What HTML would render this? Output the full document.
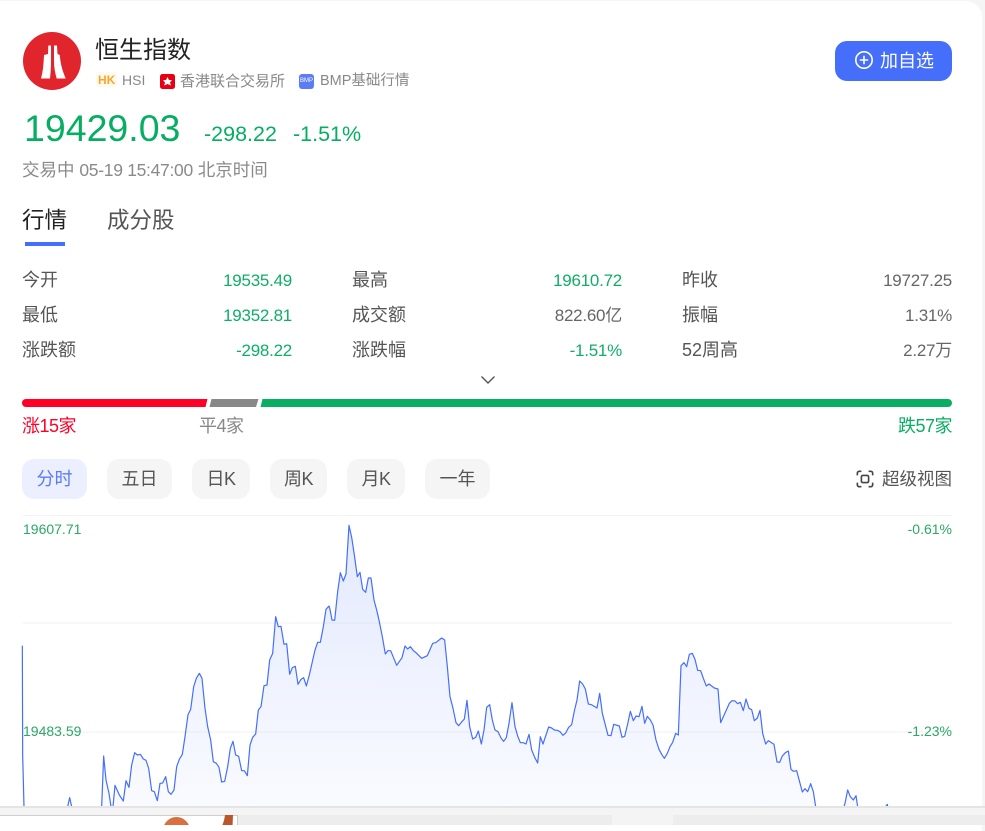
<!DOCTYPE html>
<html lang="zh-CN">
<head>
<meta charset="utf-8">
<style>
html,body{margin:0;padding:0;background:#f5f5f5;}
body{width:985px;height:825px;position:relative;overflow:hidden;font-family:"Liberation Sans","Noto Sans CJK SC",sans-serif;}
#card{position:absolute;left:0;top:1px;width:982px;height:830px;background:#fff;border-top-right-radius:16px;}
.t{position:absolute;white-space:nowrap;line-height:1;}
.r{text-align:right;}
.lab{font-size:18px;color:#555;}
.val{font-size:17px;letter-spacing:-.25px;}
.g{color:#0fae68;}
.d{color:#666;}
.btn{position:absolute;top:459px;height:40px;border-radius:12px;background:#f5f5f5;color:#555;font-size:18px;line-height:41px;text-align:center;}
.grid{position:absolute;left:23px;width:929px;height:2px;background:#f8f8f8;}
.axis{font-size:14px;color:#2aa866;}
</style>
</head>
<body>
<div id="card"></div>

<svg style="position:absolute;left:22px;top:31px" width="60" height="60" viewBox="0 0 60 60">
<circle cx="30" cy="30" r="29" fill="#e0252d"/>
<path d="M26.300 14.500 L29 14.500 L29 30 C29 37 28.600 42 28 47.500 L19 47.500 C20.800 41 21.600 34 22 24 L26 23 Z" fill="#fff"/>
<path d="M32 14.500 L35 14.500 L35.500 23 L37.800 24 C38.500 34 41 41 43.700 47.500 L34.700 47.500 C33 42 32 36 32 30 Z" fill="#fff"/>
</svg>

<div class="t" style="left:95px;top:39px;font-size:24px;color:#222;">恒生指数</div>

<div style="position:absolute;left:96px;top:72px;width:21px;height:15px;background:#fff9f0;border-radius:2px;"></div>
<div class="t" style="left:98px;top:74px;font-size:12px;font-weight:bold;color:#f9a825;">HK</div>
<div class="t" style="left:122px;top:73px;font-size:14px;color:#888;">HSI</div>
<svg style="position:absolute;left:160px;top:74px" width="15" height="15" viewBox="0 0 15 15">
<rect width="15" height="15" rx="2.500" fill="#e60012"/>
<path d="M7.500 3 L9 6 L12 6.200 L10 8.500 L11 11.500 L7.500 10 L4.200 11.500 L5 8.500 L3 6.200 L6 6 Z" fill="#fff"/>
</svg>
<div class="t" style="left:180px;top:74px;font-size:15px;color:#888;">香港联合交易所</div>
<div style="position:absolute;left:299px;top:74px;width:15px;height:15px;background:#5b7cf6;border-radius:3px;color:#fff;font-size:6px;line-height:15px;text-align:center;">BMP</div>
<div class="t" style="left:320px;top:74px;font-size:14.500px;color:#888;">BMP基础行情</div>

<div style="position:absolute;left:835px;top:41px;width:117px;height:40px;border-radius:12px;background:#456ffb;"></div>
<svg style="position:absolute;left:854px;top:50px" width="20" height="20" viewBox="0 0 20 20" fill="none" stroke="#fff" stroke-width="1.600">
<circle cx="10" cy="10" r="8.200"/><path d="M10 5.800V14.200M5.800 10H14.200"/>
</svg>
<div class="t" style="left:880px;top:52px;font-size:18px;color:#fff;">加自选</div>

<div class="t g" style="left:24px;top:110px;font-size:37.500px;color:#05ae62;">19429.03</div>
<div class="t g" style="left:204px;top:124px;font-size:21.500px;color:#05ae62;">-298.22</div>
<div class="t g" style="left:293px;top:124px;font-size:21.500px;color:#05ae62;">-1.51%</div>
<div class="t" style="left:22px;top:162px;font-size:17.500px;color:#8a8a8a;">交易中 <span style="letter-spacing:-.3px">05-19 15:47:00</span> 北京时间</div>

<div class="t" style="left:22px;top:210px;font-size:22.500px;color:#222;">行情</div>
<div class="t" style="left:107px;top:210px;font-size:22.500px;color:#555;">成分股</div>
<div style="position:absolute;left:25px;top:242px;width:40px;height:4px;background:#456ffb;"></div>

<div class="t lab" style="left:22px;top:271px;">今开</div>
<div class="t val g r" style="left:172px;width:120px;top:272px;">19535.49</div>
<div class="t lab" style="left:352px;top:271px;">最高</div>
<div class="t val g r" style="left:502px;width:120px;top:272px;">19610.72</div>
<div class="t lab" style="left:682px;top:271px;">昨收</div>
<div class="t val d r" style="left:832px;width:120px;top:272px;">19727.25</div>

<div class="t lab" style="left:22px;top:306px;">最低</div>
<div class="t val g r" style="left:172px;width:120px;top:307px;">19352.81</div>
<div class="t lab" style="left:352px;top:306px;">成交额</div>
<div class="t val d r" style="left:502px;width:120px;top:307px;">822.60亿</div>
<div class="t lab" style="left:682px;top:306px;">振幅</div>
<div class="t val d r" style="left:832px;width:120px;top:307px;">1.31%</div>

<div class="t lab" style="left:22px;top:341px;">涨跌额</div>
<div class="t val g r" style="left:172px;width:120px;top:342px;">-298.22</div>
<div class="t lab" style="left:352px;top:341px;">涨跌幅</div>
<div class="t val g r" style="left:502px;width:120px;top:342px;">-1.51%</div>
<div class="t lab" style="left:682px;top:341px;">52周高</div>
<div class="t val d r" style="left:832px;width:120px;top:342px;">2.27万</div>

<svg style="position:absolute;left:480px;top:375px" width="16" height="10" viewBox="0 0 16 10" fill="none" stroke="#555" stroke-width="1.400">
<path d="M1.500 1.500L8 8L14.500 1.500"/>
</svg>

<svg style="position:absolute;left:22px;top:399px" width="930" height="8" viewBox="0 0 930 8">
<path d="M4 0H185.500L183.500 8H4A4 4 0 0 1 4 0Z" fill="#ff0026"/>
<path d="M189.500 0H236.500L234 8H187.500Z" fill="#888"/>
<path d="M240.500 0H926A4 4 0 0 1 926 8H238.500Z" fill="#0aae62"/>
</svg>
<div class="t" style="left:22px;top:417px;font-size:18px;color:#ff0026;letter-spacing:-.5px;">涨15家</div>
<div class="t" style="left:199px;top:417px;font-size:18px;color:#888;letter-spacing:-.5px;">平4家</div>
<div class="t r" style="left:832px;width:120px;top:417px;font-size:18px;color:#0aae62;letter-spacing:-.5px;">跌57家</div>

<div class="btn" style="left:22px;width:65px;background:#ebefff;color:#5b7cf6;">分时</div>
<div class="btn" style="left:107px;width:65px;">五日</div>
<div class="btn" style="left:192px;width:58px;letter-spacing:-.5px;">日K</div>
<div class="btn" style="left:270px;width:57px;letter-spacing:-.5px;">周K</div>
<div class="btn" style="left:347px;width:58px;letter-spacing:-.5px;">月K</div>
<div class="btn" style="left:425px;width:65px;">一年</div>

<svg style="position:absolute;left:856px;top:470px" width="18" height="18" viewBox="0 0 20 20" fill="none" stroke="#444" stroke-width="1.800">
<path d="M1.500 6V3.500A2 2 0 0 1 3.500 1.500H6M14 1.500H16.500A2 2 0 0 1 18.500 3.500V6M18.500 14V16.500A2 2 0 0 1 16.500 18.500H14M6 18.500H3.500A2 2 0 0 1 1.500 16.500V14"/>
<rect x="6" y="6" width="8" height="8" rx="1.500"/>
</svg>
<div class="t" style="left:882px;top:471px;font-size:17.500px;color:#555;">超级视图</div>

<div class="grid" style="top:515px;height:1px;background:#f3f3f3;"></div>
<div class="grid" style="top:622px;"></div>
<div class="grid" style="top:731px;"></div>

<svg style="position:absolute;left:0;top:510px" width="985" height="296" viewBox="0 0 2955 888">
<defs>
<linearGradient id="fa" gradientUnits="userSpaceOnUse" x1="0" y1="46" x2="0" y2="888">
<stop offset="0" stop-color="#456ffb" stop-opacity=".15"/>
<stop offset="1" stop-color="#456ffb" stop-opacity=".03"/>
</linearGradient>
</defs>
<path fill="url(#fa)" d="M67 1000L67 407 68 735 72 890 72 1000 203 1000 203 890 209 863 215 890 215 1000 305 1000 305 890 311 738 318 810 327 850 333 890 333 1000 339 1000 339 890 345 826 358 855 370 873 378 812 387 832 395 765 404 728 412 735 421 733 430 747 438 751 446 775 455 842 463 845 472 872 480 820 488 819 497 800 505 845 513 853 522 840 530 770 538 748 547 733 555 680 564 614 572 598 581 530 589 505 598 490 606 505 615 595 623 650 632 690 640 755 649 760 657 772 665 816 674 814 683 770 691 715 699 694 707 735 716 739 725 782 733 782 742 797 750 705 758 682 767 672 775 600 783 590 792 527 801 525 809 450 818 430 827 320 835 350 843 349 852 403 860 401 869 493 877 473 886 469 894 523 903 508 911 503 919 528 928 495 945 420 953 397 961 397 970 350 978 298 987 288 990 298 996 330 1004 331 1013 245 1021 188 1030 213 1038 192 1047 46 1055 82 1063 135 1072 200 1080 187 1088 238 1097 247 1105 204 1113 204 1122 270 1130 300 1138 335 1147 380 1156 432 1164 422 1172 422 1190 466 1206 443 1215 408 1223 417 1231 410 1240 422 1248 428 1265 445 1282 437 1298 400 1307 398 1325 384 1334 390 1342 470 1350 560 1359 595 1368 638 1376 647 1384 637 1393 627 1401 571 1409 650 1418 687 1427 682 1435 663 1444 702 1452 660 1460 592 1469 584 1477 630 1485 660 1494 665 1503 684 1511 694 1519 683 1527 640 1536 578 1545 650 1553 678 1561 698 1570 698 1578 702 1587 673 1595 720 1604 742 1613 759 1621 680 1629 702 1646 651 1655 654 1663 660 1672 661 1680 665 1689 676 1697 669 1706 652 1715 644 1723 603 1731 570 1739 513 1748 522 1756 537 1765 582 1774 584 1791 594 1799 550 1807 610 1824 676 1833 677 1841 643 1858 648 1866 682 1874 679 1883 642 1891 604 1900 632 1908 618 1917 620 1926 589 1934 640 1942 619 1951 630 1959 645 1968 690 1977 718 1985 733 1993 745 2002 730 2010 710 2018 697 2027 670 2035 675 2043 467 2052 458 2060 470 2068 433 2077 430 2085 448 2093 481 2102 482 2110 505 2119 528 2127 522 2135 528 2143 534 2154 537 2162 638 2171 618 2188 580 2196 572 2205 573 2213 581 2221 577 2230 602 2238 567 2247 595 2255 599 2263 632 2272 624 2280 601 2288 670 2297 702 2305 692 2322 703 2331 756 2339 757 2347 738 2356 728 2365 723 2373 778 2381 784 2390 782 2407 846 2415 836 2423 845 2432 821 2440 845 2447 890 2447 1000 2532 1000 2532 890 2535 880 2543 840 2551 860 2560 870 2568 857 2573 890 2573 1000 2657 1000 2657 890 2662 883 2663 890 2663 1000Z"/>
<path fill="none" stroke="#456ffb" stroke-width="3.600" stroke-linejoin="round" d="M67 407L68 735 72 890 72 1000 203 1000 203 890 209 863 215 890 215 1000 305 1000 305 890 311 738 318 810 327 850 333 890 333 1000 339 1000 339 890 345 826 358 855 370 873 378 812 387 832 395 765 404 728 412 735 421 733 430 747 438 751 446 775 455 842 463 845 472 872 480 820 488 819 497 800 505 845 513 853 522 840 530 770 538 748 547 733 555 680 564 614 572 598 581 530 589 505 598 490 606 505 615 595 623 650 632 690 640 755 649 760 657 772 665 816 674 814 683 770 691 715 699 694 707 735 716 739 725 782 733 782 742 797 750 705 758 682 767 672 775 600 783 590 792 527 801 525 809 450 818 430 827 320 835 350 843 349 852 403 860 401 869 493 877 473 886 469 894 523 903 508 911 503 919 528 928 495 945 420 953 397 961 397 970 350 978 298 987 288 990 298 996 330 1004 331 1013 245 1021 188 1030 213 1038 192 1047 46 1055 82 1063 135 1072 200 1080 187 1088 238 1097 247 1105 204 1113 204 1122 270 1130 300 1138 335 1147 380 1156 432 1164 422 1172 422 1190 466 1206 443 1215 408 1223 417 1231 410 1240 422 1248 428 1265 445 1282 437 1298 400 1307 398 1325 384 1334 390 1342 470 1350 560 1359 595 1368 638 1376 647 1384 637 1393 627 1401 571 1409 650 1418 687 1427 682 1435 663 1444 702 1452 660 1460 592 1469 584 1477 630 1485 660 1494 665 1503 684 1511 694 1519 683 1527 640 1536 578 1545 650 1553 678 1561 698 1570 698 1578 702 1587 673 1595 720 1604 742 1613 759 1621 680 1629 702 1646 651 1655 654 1663 660 1672 661 1680 665 1689 676 1697 669 1706 652 1715 644 1723 603 1731 570 1739 513 1748 522 1756 537 1765 582 1774 584 1791 594 1799 550 1807 610 1824 676 1833 677 1841 643 1858 648 1866 682 1874 679 1883 642 1891 604 1900 632 1908 618 1917 620 1926 589 1934 640 1942 619 1951 630 1959 645 1968 690 1977 718 1985 733 1993 745 2002 730 2010 710 2018 697 2027 670 2035 675 2043 467 2052 458 2060 470 2068 433 2077 430 2085 448 2093 481 2102 482 2110 505 2119 528 2127 522 2135 528 2143 534 2154 537 2162 638 2171 618 2188 580 2196 572 2205 573 2213 581 2221 577 2230 602 2238 567 2247 595 2255 599 2263 632 2272 624 2280 601 2288 670 2297 702 2305 692 2322 703 2331 756 2339 757 2347 738 2356 728 2365 723 2373 778 2381 784 2390 782 2407 846 2415 836 2423 845 2432 821 2440 845 2447 890 2447 1000 2532 1000 2532 890 2535 880 2543 840 2551 860 2560 870 2568 857 2573 890 2573 1000 2657 1000 2657 890 2662 883 2663 890"/>
</svg>

<div class="t axis" style="left:23px;top:522px;">19607.71</div>
<div class="t axis r" style="left:832px;width:120px;top:522px;">-0.61%</div>
<div class="t axis" style="left:23px;top:724px;">19483.59</div>
<div class="t axis r" style="left:832px;width:120px;top:724px;">-1.23%</div>

<div style="position:absolute;left:0;top:806px;width:985px;height:19px;background:#f4f4f4;border-top:2px solid #e4e4e4;box-sizing:border-box;overflow:hidden;">
  <div style="position:absolute;left:0;top:7px;width:237px;height:20px;background:#fff;border-top:1px solid #cfcfcf;border-right:1px solid #cfcfcf;"></div>
  <div style="position:absolute;left:163px;top:9px;width:27px;height:27px;border-radius:50%;background:#d9703f;"></div>
  <svg style="position:absolute;left:218px;top:7px" width="18" height="12" viewBox="0 0 18 12"><path d="M7 0H15L14.500 12H3.500C5.500 8 6.500 4 7 0Z" fill="#b9562c"/></svg>
  <div style="position:absolute;left:238px;top:7px;width:374px;height:20px;background:#ededed;"></div>
  <div style="position:absolute;left:673px;top:7px;width:312px;height:20px;background:#ededed;"></div>
</div>
</body>
</html>
